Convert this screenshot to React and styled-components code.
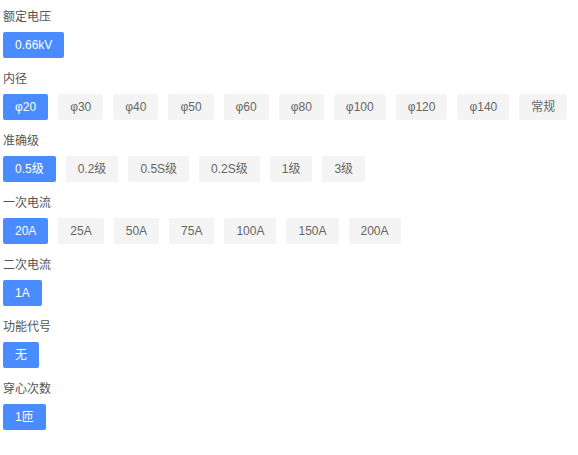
import styled, { createGlobalStyle } from "styled-components";

const groups = [
  { title: "额定电压", options: ["0.66kV"], active: 0 },
  {
    title: "内径",
    options: ["φ20", "φ30", "φ40", "φ50", "φ60", "φ80", "φ100", "φ120", "φ140", "常规"],
    active: 0,
  },
  { title: "准确级", options: ["0.5级", "0.2级", "0.5S级", "0.2S级", "1级", "3级"], active: 0 },
  { title: "一次电流", options: ["20A", "25A", "50A", "75A", "100A", "150A", "200A"], active: 0 },
  { title: "二次电流", options: ["1A"], active: 0 },
  { title: "功能代号", options: ["无"], active: 0 },
  { title: "穿心次数", options: ["1匝"], active: 0 },
];

export default function App() {
  return (
    <StyledContainer>
      <GlobalStyle />
      {groups.map((group) => (
        <Section key={group.title}>
          <Label>{group.title}</Label>
          <OptionRow>
            {group.options.map((option, index) => (
              <Option key={option} $active={index === group.active}>
                {option}
              </Option>
            ))}
          </OptionRow>
        </Section>
      ))}
    </StyledContainer>
  );
}

const GlobalStyle = createGlobalStyle`
  body {
    margin: 0;
    background: #ffffff;
    font-family: "Liberation Sans", "Noto Sans CJK SC", Arial, sans-serif;
  }
`;

const StyledContainer = styled.div`
  display: flex;
  flex-direction: column;
  padding: 8px 3px;
`;

const Section = styled.div`
  display: flex;
  flex-direction: column;
  margin-bottom: 12px;
`;

const Label = styled.div`
  font-size: 12px;
  line-height: 18px;
  color: #555555;
  margin-bottom: 6px;
`;

const OptionRow = styled.div`
  display: flex;
  flex-wrap: wrap;
  gap: 10px;
`;

const Option = styled.div`
  height: 26px;
  line-height: 26px;
  padding: 0 12px;
  border-radius: 2px;
  font-size: 12px;
  white-space: nowrap;
  cursor: pointer;
  background-color: ${(props) => (props.$active ? "#4a8bff" : "#f4f4f4")};
  color: ${(props) => (props.$active ? "#ffffff" : "#666666")};
`;
